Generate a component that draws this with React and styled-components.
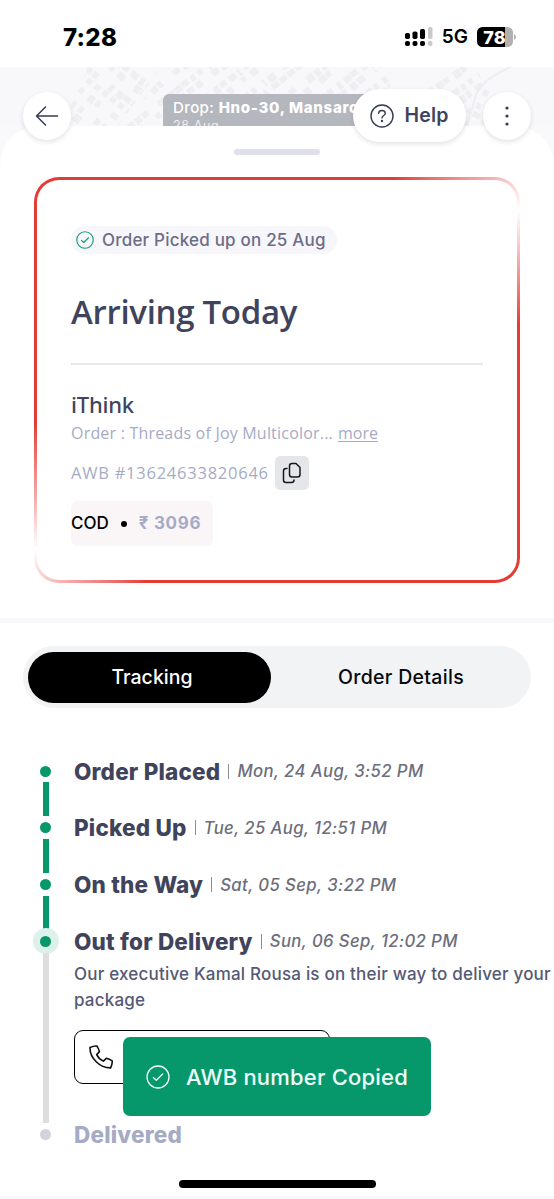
import React from 'react';
import styled, { createGlobalStyle } from 'styled-components';

const GlobalStyle = createGlobalStyle`
  * {
    box-sizing: border-box;
  }

  body {
    margin: 0;
    background: #fff;
    font-family: Inter, "Liberation Sans", sans-serif;
    color: #3f445c;
  }

  button {
    font-family: inherit;
  }
`;

const Screen = styled.div`
  position: relative;
  display: flex;
  flex-direction: column;
  width: 554px;
  height: 1199px;
  overflow: hidden;
  background: #fff;
`;

const Text = styled.span`
  font-family: ${({ $plex }) => ($plex ? '"Open Sans", "Noto Sans", sans-serif' : 'inherit')};
  font-size: ${({ $size }) => $size}px;
  font-weight: ${({ $weight }) => $weight || 400};
  line-height: ${({ $line }) => ($line ? `${$line}px` : '1.2')};
  letter-spacing: ${({ $spacing }) => $spacing || 0}px;
  color: ${({ $color }) => $color || '#3f445c'};
  white-space: nowrap;
`;

const MerchantName = styled(Text)`
  font-family: "Noto Sans", "Open Sans", sans-serif;
`;

const StatusBar = styled.div`
  display: flex;
  justify-content: space-between;
  flex: none;
  height: 67px;
  padding: 22px 38px 0 63px;
`;

const StatusIcons = styled.div`
  display: flex;
  align-items: center;
  gap: 9px;
  height: 30px;
`;

const MapArea = styled.div`
  position: relative;
  flex: none;
  height: 59px;
  background: #f8f8fb;
`;

const MapDrawing = styled.svg`
  position: absolute;
  left: 0;
  top: 0;
`;

const DropLabel = styled.div`
  position: absolute;
  left: 163px;
  top: 27px;
  width: 220px;
  height: 32px;
  padding: 3px 0 0 10px;
  overflow: hidden;
  border-radius: 6px 6px 0 0;
  background: #b5b7bf;
  display: flex;
  flex-direction: column;

  b {
    font-weight: 800;
    letter-spacing: 0.7px;
  }
`;

const FloatingBar = styled.div`
  position: absolute;
  z-index: 2;
  left: 23px;
  right: 23px;
  top: 89px;
  display: flex;
  align-items: center;
  gap: 17px;
`;

const RoundButton = styled.button`
  display: flex;
  align-items: center;
  justify-content: center;
  width: 48px;
  height: 48px;
  padding: 0;
  border: 0;
  border-radius: 50%;
  background: #fff;
  box-shadow: 0 2px 5px rgba(30, 30, 50, 0.13);
`;

const HelpButton = styled(RoundButton)`
  width: 113px;
  height: 53px;
  margin-left: auto;
  gap: 10px;
  border-radius: 27px;
`;

const Sheet = styled.div`
  position: relative;
  flex: none;
  height: 492px;
  padding: 23px 34px 0;
  background: #fff;

  &::before,
  &::after {
    content: '';
    position: absolute;
    top: 0;
    width: 38px;
    height: 38px;
  }

  &::before {
    left: 0;
    background: radial-gradient(circle at 100% 100%, #fff 37px, #f9f9fb 38px);
  }

  &::after {
    right: 0;
    background: radial-gradient(circle at 0 100%, #fff 37px, #f9f9fb 38px);
  }
`;

const Handle = styled.div`
  width: 86px;
  height: 6px;
  margin: 0 auto 22px;
  border-radius: 3px;
  background: #e0e0ea;
`;

const Card = styled.div`
  display: flex;
  flex-direction: column;
  align-items: flex-start;
  height: 406px;
  padding: 46px 34px 0 34px;
  border: 3px solid transparent;
  border-radius: 25px;
  background:
    linear-gradient(#fff, #fff) padding-box,
    conic-gradient(
        from 55deg,
        #fff 0deg,
        #f3aaaa 9deg,
        #e43c35 22deg,
        #e43c35 158deg,
        #f3aaaa 171deg,
        #fff 180deg,
        #f3aaaa 189deg,
        #e43c35 205deg,
        #e43c35 335deg,
        #f3aaaa 351deg,
        #fff 360deg
      )
      border-box;
`;

const StatusPill = styled.div`
  display: flex;
  align-items: center;
  gap: 8px;
  width: 266px;
  height: 28px;
  padding-left: 5px;
  border-radius: 14px;
  background: #f7f6fa;
`;

const Headline = styled.h1`
  display: flex;
  align-items: center;
  width: 412px;
  height: 111px;
  margin: 0;
  padding-top: 6px;
  border-bottom: 2px solid #e8e8e9;
`;

const Merchant = styled.div`
  display: flex;
  flex-direction: column;
  padding-top: 24px;
`;

const OrderLine = styled.div`
  display: flex;
  gap: 5px;
  padding-top: 1px;
`;

const MoreLink = styled.a`
  border-bottom: 1px solid #a6abc5;
  height: 22px;
`;

const AwbLine = styled.div`
  display: flex;
  align-items: center;
  gap: 6px;
  height: 34px;
  margin-top: 10px;
  padding-bottom: 1px;
`;

const CopyButton = styled.button`
  display: flex;
  flex: none;
  align-items: center;
  justify-content: center;
  width: 34px;
  height: 34px;
  padding: 0;
  border: 0;
  border-radius: 5px;
  background: #e5e6ea;
`;

const Payment = styled.div`
  display: flex;
  align-items: center;
  width: 142px;
  height: 45px;
  margin-top: 11px;
  border-radius: 7px;
  background: #faf6f8;
`;

const Bullet = styled.i`
  width: 6px;
  height: 6px;
  margin: 0 12px 0 12px;
  border-radius: 50%;
  background: #000;
`;

const Divider = styled.div`
  flex: none;
  height: 5px;
  background: #f8f8fb;
`;

const Tabs = styled.div`
  display: grid;
  grid-template-columns: 243px 1fr;
  flex: none;
  height: 62px;
  margin: 23px 23px 0;
  padding: 6px 0 5px 5px;
  border-radius: 31px;
  background: #f2f3f5;
`;

const Tab = styled.button`
  display: flex;
  align-items: center;
  justify-content: center;
  padding: 1px 0 0 ${({ $active }) => ($active ? 5 : 0)}px;
  border: 0;
  border-radius: 26px;
  background: ${({ $active }) => ($active ? '#000' : 'transparent')};
`;

const Timeline = styled.div`
  display: flex;
  flex-direction: column;
  padding: 35px 0 0 33px;
`;

const Step = styled.div`
  display: flex;
  flex: none;
  gap: 16px;
  height: ${({ $height }) => $height}px;
`;

const Rail = styled.div`
  display: flex;
  flex-direction: column;
  align-items: center;
  flex: none;
  width: 25px;
`;

const Dot = styled.div`
  flex: none;
  display: flex;
  align-items: center;
  justify-content: center;
  width: 26px;
  height: 26px;
  margin: ${({ $current }) => ($current ? '15px 0 -1px' : '15px 0 -2px')};
  border-radius: 50%;
  background: ${({ $current }) => ($current ? '#dcf1ea' : 'transparent')};

  &::before {
    content: '';
    width: 11px;
    height: 11px;
    border-radius: 50%;
    background: ${({ $pending }) => ($pending ? '#d2d3dd' : '#06986b')};
  }
`;

const Bar = styled.div`
  flex: none;
  width: 6px;
  height: ${({ $height }) => $height}px;
  background: ${({ $pending }) => ($pending ? '#dedede' : '#06986b')};
`;

const StepBody = styled.div`
  padding-top: 13px;
`;

const StepTitle = styled.div`
  display: flex;
  align-items: center;
  height: 30px;
`;

const Separator = styled.i`
  width: 1px;
  height: 15px;
  margin: 0 8px 0 8px;
  background: #8a8c96;
`;

const StepTime = styled(Text)`
  font-style: italic;
`;

const StepNote = styled.p`
  display: flex;
  flex-direction: column;
  margin: 5px 0 0;
`;

const CallButton = styled.button`
  display: flex;
  align-items: center;
  width: 256px;
  height: 54px;
  margin-top: 17px;
  padding: 0 0 0 14px;
  border: 1px solid #000;
  border-radius: 9px;
  background: #fff;
`;

const Toast = styled.div`
  position: absolute;
  z-index: 3;
  left: 123px;
  top: 1037px;
  display: flex;
  align-items: center;
  gap: 16px;
  width: 308px;
  height: 79px;
  padding: 1px 0 0 23px;
  border-radius: 7px;
  background: #06986b;
`;

const HomeIndicator = styled.div`
  position: absolute;
  left: 179px;
  bottom: 11px;
  width: 197px;
  height: 8px;
  border-radius: 4px;
  background: #000;
`;

const BottomEdge = styled.div`
  position: absolute;
  left: 0;
  right: 0;
  bottom: 0;
  height: 3px;
  background: #f8f8fc;
`;

// Small deterministic city blocks, laid out along two slanted street grids.
const Blocks = ({ columns, rows, seed }) => {
  const items = [];
  for (let r = 0; r < rows; r++) {
    for (let c = 0; c < columns; c++) {
      const n = (r * 37 + c * 53 + r * c * 11 + seed) % 17;
      if (n < 3) continue;
      items.push(
        <rect
          key={`${r}-${c}`}
          x={c * 10 + (n % 3)}
          y={r * 12 + (r % 2) * 3}
          width={5 + (n % 4)}
          height={6 + (n % 3)}
        />
      );
    }
  }
  return items;
};

const CityMap = () => (
  <MapDrawing width="554" height="59" viewBox="0 0 554 59">
    <clipPath id="left"><path d="M88 0H161L118 59H62Z" /></clipPath>
    <clipPath id="middle"><path d="M168 0H390V59H124Z" /></clipPath>
    <clipPath id="right"><path d="M390 0H472Q487 10 478 25L466 59H390Z" /></clipPath>
    <g fill="#efeff2">
      <g clipPath="url(#left)">
        <g transform="translate(50 -5) rotate(38)"><Blocks columns={16} rows={12} seed={4} /></g>
        <g transform="translate(50 -5) rotate(38) translate(0 -84)"><Blocks columns={16} rows={7} seed={8} /></g>
      </g>
      <g clipPath="url(#middle)">
        <g transform="translate(100 60) rotate(-38)"><Blocks columns={34} rows={20} seed={2} /></g>
      </g>
      <g clipPath="url(#right)">
        <g transform="translate(360 70) rotate(-35)"><Blocks columns={20} rows={12} seed={6} /></g>
      </g>
      <g transform="translate(484 22) rotate(25)"><Blocks columns={3} rows={3} seed={9} /></g>
    </g>
    <path d="M511 0Q480 13 475 31T467 59" fill="none" stroke="#ededf1" strokeWidth="2" />
    <path d="M165 0L120 59M238 0L286 36M374 0L440 35" fill="none" stroke="#f8f8fb" strokeWidth="4" />
  </MapDrawing>
);

const Signal = () => (
  <svg width="28" height="20" viewBox="0 0 28 20">
    <g fill="#000">
      <rect x="0" y="6" width="5" height="6" rx="1.8" />
      <rect x="7.5" y="4.5" width="5" height="7.5" rx="1.8" />
      <rect x="15" y="2" width="5" height="10" rx="1.8" />
      <rect x="0" y="14" width="5" height="5" rx="2" />
      <rect x="7.5" y="14" width="5" height="5" rx="2" />
      <rect x="15" y="14" width="5" height="5" rx="2" />
    </g>
    <g fill="#c9c9c9">
      <rect x="23" y="0" width="4.5" height="12" rx="1.8" />
      <rect x="23" y="14" width="4.5" height="5" rx="2" />
    </g>
  </svg>
);

const Battery = () => (
  <svg width="39" height="20" viewBox="0 0 39 20">
    <path d="M5.500 0H28V20H5.500A5.500 5.500 0 0 1 0 14.500V5.500A5.500 5.500 0 0 1 5.500 0Z" fill="#000" />
    <path d="M28 0H30.500A5.500 5.500 0 0 1 36 5.500V14.500A5.500 5.500 0 0 1 30.500 20H28Z" fill="#b1b1b1" />
    <path d="M37 7Q39 8 39 10T37 13Z" fill="#b1b1b1" />
    <text x="17.500" y="16.500" textAnchor="middle" fontFamily="Inter" fontSize="18" fontWeight="800" fill="#fff">78</text>
  </svg>
);

const CheckCircle = ({ size, color, stroke }) => (
  <svg width={size} height={size} viewBox="0 0 24 24" fill="none" stroke={color} strokeWidth={stroke}>
    <circle cx="12" cy="12" r="11" />
    <path d="M7.300 12.500L10.300 15.300L16.700 9" strokeLinecap="round" strokeLinejoin="round" />
  </svg>
);

const steps = [
  { title: 'Order Placed', time: 'Mon, 24 Aug, 3:52 PM' },
  { title: 'Picked Up', time: 'Tue, 25 Aug, 12:51 PM' },
  { title: 'On the Way', time: 'Sat, 05 Sep, 3:22 PM' },
];

const StepHeading = ({ title, time }) => (
  <StepTitle>
    <Text $size={22.5} $weight={800} $spacing={0.2}>{title}</Text>
    <Separator />
    <StepTime $size={16.7} $weight={500} $color="#6c6e7c" $spacing={0.4}>{time}</StepTime>
  </StepTitle>
);

const App = () => (
  <>
    <GlobalStyle />
    <Screen>
      <StatusBar>
        <Text $size={24} $weight={800} $color="#000" $line={31} $spacing={0.3}>7:28</Text>
        <StatusIcons>
          <Signal />
          <Text $size={19} $weight={600} $color="#000" $line={26}>5G</Text>
          <Battery />
        </StatusIcons>
      </StatusBar>

      <MapArea>
        <CityMap />
        <DropLabel>
          <Text $size={15} $color="#fff" $weight={500} $line={21} $spacing={0.4}>
            Drop: <b>Hno-30, Mansaro</b>
          </Text>
          <Text $size={12.5} $color="#eeeef2" $line={16} $spacing={0.6}>28 Aug</Text>
        </DropLabel>
      </MapArea>

      <FloatingBar>
        <RoundButton aria-label="Back">
          <svg width="24" height="20" viewBox="0 0 24 20" fill="none" stroke="#363a50" strokeWidth="1.500" strokeLinecap="round" strokeLinejoin="round">
            <path d="M10.500 1L1.500 10L10.500 19M1.500 10H22.500" />
          </svg>
        </RoundButton>
        <HelpButton>
          <svg width="24" height="24" viewBox="0 0 24 24" fill="none" stroke="#363a50" strokeWidth="1.400" strokeLinecap="round">
            <circle cx="12" cy="12" r="11" />
            <path d="M8.600 9.300C8.800 7.400 10.100 6.500 12 6.500S15.300 7.700 15.300 9.400C15.300 11.500 12 11.500 12 14" />
            <circle cx="12" cy="17" r="0.500" fill="#363a50" />
          </svg>
          <Text $size={19.5} $weight={600} $spacing={0.2}>Help</Text>
        </HelpButton>
        <RoundButton aria-label="Menu">
          <svg width="6" height="20" viewBox="0 0 6 20" fill="#363a50">
            <circle cx="3" cy="2" r="1.600" />
            <circle cx="3" cy="10" r="1.600" />
            <circle cx="3" cy="18" r="1.600" />
          </svg>
        </RoundButton>
      </FloatingBar>

      <Sheet>
        <Handle />
        <Card>
          <StatusPill>
            <CheckCircle size={18} color="#169d70" stroke={1.5} />
            <Text $size={17} $weight={500} $color="#6c6d86" $spacing={0.2}>Order Picked up on 25 Aug</Text>
          </StatusPill>
          <Headline>
            <Text $plex $size={33} $weight={600} $spacing={-0.3}>Arriving Today</Text>
          </Headline>
          <Merchant>
            <MerchantName $size={22} $weight={500} $line={30} $spacing={-0.2}>iThink</MerchantName>
            <OrderLine>
              <Text $plex $size={16} $color="#a6abc5" $line={26} $spacing={0.2}>Order : Threads of Joy Multicolor...</Text>
              <MoreLink>
                <Text $plex $size={16} $color="#a6abc5" $line={26}>more</Text>
              </MoreLink>
            </OrderLine>
          </Merchant>
          <AwbLine>
            <Text $plex $size={16.5} $color="#a6abc5" $spacing={0.76}>AWB #13624633820646</Text>
            <CopyButton aria-label="Copy">
              <svg width="20" height="22" viewBox="0 0 20 22" fill="none" stroke="#17181d" strokeWidth="1.500" strokeLinejoin="round">
                <path d="M10 1.500H14L18 5.500V12.500Q18 15 15.500 15H10Q7.500 15 7.500 12.500V4Q7.500 1.500 10 1.500Z" />
                <path d="M5 6.500H4Q1.500 6.500 1.500 9V18Q1.500 20.500 4 20.500H9.500Q12 20.500 12 18" strokeLinecap="round" />
              </svg>
            </CopyButton>
          </AwbLine>
          <Payment>
            <Text $size={17} $weight={500} $color="#000">COD</Text>
            <Bullet />
            <Text $size={17} $weight={700} $color="#a6abc5" $spacing={0.7}>₹ 3096</Text>
          </Payment>
        </Card>
      </Sheet>

      <Divider />

      <Tabs>
        <Tab $active>
          <Text $size={19.5} $weight={500} $color="#fff">Tracking</Text>
        </Tab>
        <Tab>
          <Text $size={19.5} $weight={500} $color="#08090c" $spacing={0.3}>Order Details</Text>
        </Tab>
      </Tabs>

      <Timeline>
        {steps.map((step) => (
          <Step key={step.title} $height={56.8}>
            <Rail>
              <Dot />
              <Bar $height={34} />
            </Rail>
            <StepBody>
              <StepHeading {...step} />
            </StepBody>
          </Step>
        ))}
        <Step $height={193.6}>
          <Rail>
            <Dot $current />
            <Bar $pending $height={170} />
          </Rail>
          <StepBody>
            <StepHeading title="Out for Delivery" time="Sun, 06 Sep, 12:02 PM" />
            <StepNote>
              <Text $size={17} $weight={500} $color="#555975" $line={26} $spacing={0.2}>Our executive Kamal Rousa is on their way to deliver your</Text>
              <Text $size={17} $weight={500} $color="#555975" $line={26} $spacing={0.2}>package</Text>
            </StepNote>
            <CallButton aria-label="Call">
              <svg width="24" height="24" viewBox="0 0 24 24" fill="none" stroke="#111" strokeWidth="1.600" strokeLinejoin="round">
                <path d="M1 2.500Q5.500 .5 8 1.100Q9.600 3.500 10.500 6.600L7.700 9.600Q9.600 13.700 14.400 16.100L17.300 13.300Q20.500 14 23.200 15.900Q23.500 18.500 21.700 22.900Q13.500 23 7.200 16.700Q.8 10.500 1 2.500Z" />
              </svg>
            </CallButton>
          </StepBody>
        </Step>
        <Step $height={50}>
          <Rail>
            <Dot $pending />
          </Rail>
          <StepBody>
            <StepTitle>
              <Text $size={22.5} $weight={800} $color="#a6abc5" $spacing={0.2}>Delivered</Text>
            </StepTitle>
          </StepBody>
        </Step>
      </Timeline>

      <Toast>
        <CheckCircle size={24} color="#e9fff7" stroke={1.3} />
        <Text $size={22} $weight={500} $color="#effff9" $spacing={0.2}>AWB number Copied</Text>
      </Toast>
      <HomeIndicator />
      <BottomEdge />
    </Screen>
  </>
);

export default App;
